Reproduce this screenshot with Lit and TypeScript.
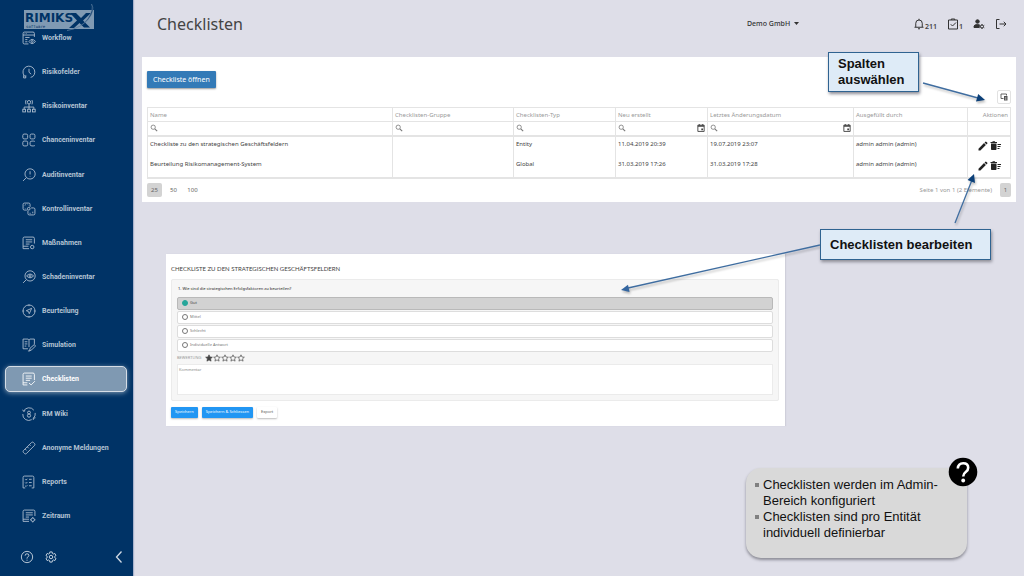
import { LitElement, html, css, svg, nothing } from "lit";
import { customElement, state } from "lit/decorators.js";
import { classMap } from "lit/directives/class-map.js";

const navIcons: Record<string, unknown> = {
  workflow: svg`<path d="M23 11V4.500Q23 2 20.500 2h-16Q2 2 2 4.500v17Q2 24 4.500 24H12M2 7.500h21M5 4.800h1M8 4.800h1M6 12h8M6 16h4M6 20h4"/><path d="M13 19.500q5.500-8 12 0q-6.500 8-12 0z"/><circle cx="19" cy="19.500" r="1.800"/>`,
  clock: svg`<path d="M7 22.500A11 11 0 1 1 20 21.500"/><path d="M13 7v6.500l4 3.500M3 19v5h4M7 19v5M20 21.500l-4 1.500"/>`,
  risk: svg`<circle cx="13" cy="6" r="3.200"/><path d="M7.500 2q-2 4 0 8M18.500 2q2 4 0 8M13 9.500v9M4 19v-4h18v4"/><rect x="1.500" y="19" width="5" height="5"/><rect x="10.500" y="19" width="5" height="5"/><rect x="19.500" y="19" width="5" height="5"/>`,
  chance: svg`<rect x="1.500" y="2" width="9" height="9" rx="2.500"/><rect x="15" y="2" width="9" height="9" rx="2.500"/><rect x="1.500" y="15" width="9" height="9" rx="2.500"/><path d="M24 16q-1-1-3-1h-2.500Q15 15 15 18v3q0 3 3.500 3H21q2 0 3-1"/>`,
  audit: svg`<circle cx="15" cy="11" r="9.500"/><path d="M8 18l-6 6M15 6v6M15 14.800v1"/>`,
  control: svg`<path d="M9 15H4.500Q2 15 2 12.500v-8Q2 2 4.500 2h8Q15 2 15 4.500V9M5 6l2-1M11 5l1 1M5 11l1 1"/><path d="M17 11h4.500q2.500 0 2.500 2.500v8q0 2.500-2.500 2.500h-8q-2.500 0-2.500-2.500V16M14 21h2M20 21v-3"/><circle cx="12.500" cy="12.500" r="2.500"/>`,
  task: svg`<path d="M13 23.500H2V4.500Q2 2 4.500 2h16Q23 2 23 4.500V14M2 19h10M7 7h12M7 11h12M7 15h7"/><circle cx="19" cy="20.500" r="3.200"/>`,
  damage: svg`<circle cx="15" cy="11" r="9.500"/><path d="M8 18l-6 6M8.500 11q6.500-7 13 0q-6.500 7-13 0z"/><circle cx="15" cy="11" r="2"/>`,
  compass: svg`<circle cx="13" cy="13" r="11.200"/><path d="M18 8L8 12.500l4 1.500 1.500 4zM13 1v3M13 22v3M1 13h3M22 13h3"/>`,
  simulation: svg`<path d="M23 11V2h-8.500L13 3.500 11.500 2H2v18h9M13 3.500V17M5 7h5M5 11h5M5 15h3"/><path d="M14 24l1-5 8-7 2 3-7 7zM11 24h3"/>`,
  checklist: svg`<path d="M10 24H2V4.500Q2 2 4.500 2h16Q23 2 23 4.500V15M2 20h8M7 7.500h11M7 11.500h11M7 15.500h8M13 20.500l4 3.500 7-7"/>`,
  wiki: svg`<path d="M3 8A11 11 0 0 1 22 6M24.500 11A11 11 0 0 1 21 21M18 23.500A11 11 0 0 1 1.500 13M1 5l2 3 3-1M25 20l-4 1v3"/><circle cx="13" cy="10.300" r="2.700"/><circle cx="13" cy="16" r="3"/>`,
  anonymous: svg`<path d="M2.500 18L18 2.500q1.500-1 3 0l2.500 2.500q1 1.500 0 3L8 23.500q-1.500 1-3 0L2.500 21q-1-1.500 0-3zM6 15l2.500 2.500M10 11l2.500 2.500M14 7l2 2"/>`,
  reports: svg`<path d="M6 24H2V4.500Q2 2 4.500 2h15Q22 2 22 4.500V24h-4M6 8l1.500 1.500L10 7M6 14l1.500 1.500L10 13M6 20l1.500 1.500L10 19M13 8h5M13 14h5M13 20h5"/>`,
  period: svg`<path d="M13 23H2V4.500Q2 2 4.500 2h17Q24 2 24 4.500V13M2 19h11M7 7h13M7 11h13M7 15h6"/><circle cx="20" cy="20" r="3.200"/><path d="M20 15v2M20 23v2M15 20h2M23 20h2"/>`,
};

const navItems: [string, string][] = [
  ["workflow", "Workflow"],
  ["clock", "Risikofelder"],
  ["risk", "Risikoinventar"],
  ["chance", "Chanceninventar"],
  ["audit", "Auditinventar"],
  ["control", "Kontrollinventar"],
  ["task", "Maßnahmen"],
  ["damage", "Schadeninventar"],
  ["compass", "Beurteilung"],
  ["simulation", "Simulation"],
  ["checklist", "Checklisten"],
  ["wiki", "RM Wiki"],
  ["anonymous", "Anonyme Meldungen"],
  ["reports", "Reports"],
  ["period", "Zeitraum"],
];

const gearPath =
  "M19.4 13a7.500 7.500 0 0 0 0-2l2.100-1.600-2-3.500-2.500 1a7.500 7.500 0 0 0-1.700-1L15 3.300h-4l-.400 2.600a7.500 7.500 0 0 0-1.700 1l-2.500-1-2 3.500L6.500 11a7.500 7.500 0 0 0 0 2l-2.100 1.600 2 3.500 2.500-1a7.500 7.500 0 0 0 1.700 1l.400 2.600h4l.400-2.600a7.500 7.500 0 0 0 1.700-1l2.500 1 2-3.500z";

@customElement("side-nav")
export class SideNav extends LitElement {
  static styles = css`
    :host {
      display: flex;
      flex-direction: column;
      flex: none;
      width: 133px;
      min-height: 100vh;
      box-sizing: border-box;
      background: #003366;
      color: #b4c3d3;
      font-family: Roboto, sans-serif;
      box-shadow: 1px 0 1px #a9b3cc;
    }
    .brand {
      height: 25px;
    }
    .brand svg {
      display: block;
      margin-left: 24px;
      overflow: visible;
    }
    nav {
      flex: 1;
      display: flex;
      flex-direction: column;
      justify-content: space-between;
    }
    .item {
      display: flex;
      align-items: center;
      gap: 6px;
      height: 26px;
      box-sizing: border-box;
      margin: 0 6px 0 5px;
      padding-left: 16px;
      border: 1px solid transparent;
      border-radius: 5px;
      font-size: 7px;
      font-weight: 700;
      line-height: 12px;
      color: inherit;
      text-decoration: none;
    }
    .item svg,
    .foot svg {
      width: 14px;
      height: 14px;
      fill: none;
      stroke: currentColor;
      stroke-width: 1.6;
    }
    .active {
      background: #7f99b2;
      border-color: #d5dde6;
      color: #ffffff;
      box-shadow: 0 1px 5px #7f99b2;
    }
    .foot {
      display: flex;
      align-items: center;
      gap: 10px;
      height: 47px;
      box-sizing: border-box;
      padding: 8px 7px 0 20px;
    }
    .foot button {
      display: flex;
      padding: 0;
      border: 0;
      background: none;
      color: #d0dae4;
    }
    .foot .collapse {
      margin-left: auto;
    }
    .foot .collapse svg {
      stroke-width: 1.3;
    }
  `;

  render() {
    return html`
      <div class="brand">
        <svg width="72" height="34" viewBox="24 0 72 34" role="img" aria-label="RIMIKS X software">
          <rect x="24" y="10" width="70" height="19" fill="#809ab3" />
          <text x="25" y="22" font-family="DejaVu Sans" font-weight="700" font-size="12" fill="#003366">RIMIKS</text>
          <text x="26" y="28" font-family="DejaVu Sans Mono" font-size="4" fill="#003366">software</text>
          <path d="M70 13h6l5 5 5-5h5l-8 7.500 7 7h-6l-4.500-4.500-5.500 5h-5l8-7.500z" fill="#003366" />
          <path d="M91.500 4q4 6-3 15T67 30.500Q82 28 88 18.500T91.500 4z" fill="#003366" stroke="#5f7f9f" stroke-width="0.500" />
        </svg>
      </div>
      <nav>
        ${navItems.map(
          ([icon, label]) => html`<a
            href="#${icon}"
            class=${classMap({ item: true, active: icon === "checklist" })}
            aria-current=${icon === "checklist" ? "page" : nothing}
            ><svg viewBox="0 0 26 26" aria-hidden="true">${navIcons[icon]}</svg><span>${label}</span></a
          >`
        )}
      </nav>
      <div class="foot">
        <button aria-label="Hilfe">
          <svg viewBox="0 0 26 26">
            <circle cx="13" cy="13" r="10.500" />
            <path d="M9.500 10.500q0-3.500 3.500-3.500t3.500 3q0 2-2 3T13 16M13 18v2" />
          </svg>
        </button>
        <button aria-label="Einstellungen">
          <svg viewBox="1 0 24 24"><path d=${gearPath} /><circle cx="13" cy="12" r="3" /></svg>
        </button>
        <button class="collapse" aria-label="Menü einklappen">
          <svg viewBox="0 0 14 14"><path d="M9.500 1.500L4.500 7l5 5.500" /></svg>
        </button>
      </div>
    `;
  }
}

const search = svg`<circle cx="6" cy="6" r="4" fill="none" stroke="#777" stroke-width="1.500"/><path d="M9 9l4.500 4.500" stroke="#777" stroke-width="2"/>`;
const calendar = svg`<path d="M1.500 2h11v11h-11zM4 0v3M10 0v3" fill="none" stroke="#444" stroke-width="1.600"/><path d="M1.500 2h11v3h-11zM7.500 8h3v3h-3z" fill="#444"/>`;

interface Column {
  key: string;
  label: string;
  filter?: "text" | "date";
}

const columns: Column[] = [
  { key: "name", label: "Name", filter: "text" },
  { key: "group", label: "Checklisten-Gruppe", filter: "text" },
  { key: "type", label: "Checklisten-Typ", filter: "text" },
  { key: "created", label: "Neu erstellt", filter: "date" },
  { key: "changed", label: "Letztes Änderungsdatum", filter: "date" },
  { key: "author", label: "Ausgefüllt durch" },
  { key: "actions", label: "Aktionen" },
];

const rows: Record<string, string>[] = [
  {
    name: "Checkliste zu den strategischen Geschäftsfeldern",
    group: "",
    type: "Entity",
    created: "11.04.2019 20:39",
    changed: "19.07.2019 23:07",
    author: "admin admin (admin)",
  },
  {
    name: "Beurteilung Risikomanagement-System",
    group: "",
    type: "Global",
    created: "31.03.2019 17:26",
    changed: "31.03.2019 17:28",
    author: "admin admin (admin)",
  },
];

@customElement("checklist-grid")
export class ChecklistGrid extends LitElement {
  static styles = css`
    :host {
      display: block;
      padding: 14px 5px 5px;
      background: #ffffff;
      color: #444444;
      font-family: "Noto Sans", sans-serif;
      font-size: 6px;
      line-height: 10px;
    }
    button {
      font: inherit;
      border: 0;
      padding: 0;
      background: none;
      color: inherit;
    }
    .open {
      display: block;
      height: 17px;
      padding: 0 6px;
      background: #337ab7;
      color: #ffffff;
      border-radius: 1px;
      font-size: 7px;
      box-shadow: 0 1px 2px #999999;
    }
    .tools {
      display: flex;
      justify-content: flex-end;
      padding: 2px 0 3px;
    }
    .chooser {
      display: flex;
      align-items: center;
      justify-content: center;
      width: 14px;
      height: 14px;
      box-sizing: border-box;
      border: 1px solid #e2e2e2;
      border-radius: 2px;
    }
    svg {
      display: block;
    }
    table {
      width: 100%;
      table-layout: fixed;
      border-collapse: collapse;
      border: 1px solid #e4e4e4;
      border-bottom-width: 2px;
    }
    th,
    td {
      padding: 0 2px;
      border-right: 1px solid #e4e4e4;
      text-align: left;
      overflow: hidden;
      white-space: nowrap;
    }
    th {
      height: 14px;
      box-sizing: border-box;
      color: #999999;
      font-weight: 400;
      border-bottom: 1px solid #e4e4e4;
    }
    thead tr:last-child td {
      height: 14px;
      box-sizing: border-box;
      border-bottom: 2px solid #e4e4e4;
    }
    tbody td {
      height: 21px;
      box-sizing: border-box;
      padding-top: 2px;
      vertical-align: top;
    }
    .col-group { width: 121px; }
    .col-type { width: 102px; }
    .col-created { width: 92px; }
    .col-changed { width: 146px; }
    .col-author { width: 114px; }
    .col-actions { width: 43px; }
    th:last-child {
      text-align: right;
    }
    .filter {
      display: flex;
      align-items: center;
      gap: 2px;
    }
    .filter svg {
      flex: none;
      width: 8px;
      height: 8px;
    }
    .filter input {
      flex: 1;
      min-width: 0;
      height: 10px;
      border: 0;
      padding: 0;
      outline: 0;
      background: none;
      font: inherit;
    }
    .actions {
      display: flex;
      justify-content: center;
      gap: 1px;
      padding-top: 1px;
    }
    .pager {
      display: flex;
      align-items: center;
      gap: 4px;
      padding-top: 4px;
      color: #666666;
    }
    .pager button {
      min-width: 15px;
      height: 14px;
      border-radius: 2px;
    }
    .pager .current {
      background: #d3d3d3;
    }
    .pager .page {
      min-width: 11px;
    }
    .info {
      margin-left: auto;
      margin-right: 4px;
      color: #999999;
    }
  `;

  private filterCell(column: Column) {
    if (!column.filter) return html`<td></td>`;
    return html`<td>
      <div class="filter">
        <svg viewBox="0 0 15 15" aria-hidden="true">${search}</svg>
        <input type="text" aria-label=${column.label + " filtern"} />
        ${column.filter === "date"
          ? html`<button aria-label="Kalender öffnen"><svg viewBox="0 0 14 14">${calendar}</svg></button>`
          : nothing}
      </div>
    </td>`;
  }

  render() {
    return html`
      <button class="open">Checkliste öffnen</button>
      <div class="tools">
        <button class="chooser" aria-label="Spalten auswählen">
          <svg width="8" height="8" viewBox="0 0 16 16">
            <path d="M13 5V2H2v9h5" fill="none" stroke="#555" stroke-width="1.800" />
            <path d="M8 6h7v9H8z" fill="#555" />
            <path d="M11.500 8v6" stroke="#fff" />
          </svg>
        </button>
      </div>
      <table>
        <colgroup>
          ${columns.map((c) => html`<col class="col-${c.key}" />`)}
        </colgroup>
        <thead>
          <tr>
            ${columns.map((c) => html`<th scope="col">${c.label}</th>`)}
          </tr>
          <tr>
            ${columns.map((c) => this.filterCell(c))}
          </tr>
        </thead>
        <tbody>
          ${rows.map(
            (row) => html`<tr>
              ${columns.map((c) =>
                c.key === "actions"
                  ? html`<td>
                      <div class="actions">
                        <button aria-label="Bearbeiten">
                          <svg width="12" height="12" viewBox="0 0 24 24">
                            <path
                              fill="#222"
                              d="M3 17.250V21h3.750L17.810 9.940l-3.750-3.750L3 17.250zM20.710 7.040a1 1 0 0 0 0-1.410l-2.340-2.340a1 1 0 0 0-1.410 0l-1.830 1.830 3.750 3.750 1.830-1.830z"
                            />
                          </svg>
                        </button>
                        <button aria-label="Löschen">
                          <svg width="12" height="12" viewBox="0 0 24 24">
                            <path
                              fill="#222"
                              d="M15 16h4v2h-4zm0-8h7v2h-7zm0 4h6v2h-6zM2 18c0 1.100.9 2 2 2h7c1.100 0 2-.9 2-2V7H2v11zM14 4h-3.500l-1-1.500h-4l-1 1.500H1v2.200h13z"
                            />
                          </svg>
                        </button>
                      </div>
                    </td>`
                  : html`<td>${row[c.key]}</td>`
              )}
            </tr>`
          )}
        </tbody>
      </table>
      <div class="pager">
        <button class="current">25</button>
        <button>50</button>
        <button>100</button>
        <span class="info">Seite 1 von 1 (2 Elemente)</span>
        <button class="current page">1</button>
      </div>
    `;
  }
}

@customElement("checklist-form")
export class ChecklistForm extends LitElement {
  static styles = css`
    :host {
      display: block;
      padding: 11px 6px 8px 5px;
      background: #ffffff;
      color: #444444;
      font-family: "Noto Sans", sans-serif;
      font-size: 4px;
      line-height: 8px;
      box-shadow: 1px 0 1px #cfcfda;
    }
    h2 {
      margin: 0 0 6px;
      font-family: Lato, sans-serif;
      font-size: 6px;
      font-weight: 400;
      line-height: 8px;
      text-transform: uppercase;
    }
    fieldset {
      margin: 0;
      min-width: 0;
      padding: 5px 5px;
      border: 1px solid #ebebeb;
      border-radius: 2px;
      background: #f6f6f6;
    }
    legend {
      float: left;
      width: 100%;
      margin-bottom: 4px;
      padding: 0 1px;
      box-sizing: border-box;
      font-weight: 500;
    }
    .options {
      clear: both;
      display: flex;
      flex-direction: column;
      gap: 1px;
    }
    .option {
      display: flex;
      align-items: center;
      gap: 2px;
      height: 13px;
      box-sizing: border-box;
      padding-left: 4px;
      border: 1px solid #dddddd;
      border-radius: 2px;
      background: #ffffff;
      color: #777777;
    }
    .chosen {
      background: #d2d2d2;
      border-color: #b9b9b9;
      color: #444444;
    }
    .option input {
      appearance: none;
      width: 6px;
      height: 6px;
      box-sizing: border-box;
      margin: 0;
      border: 1px solid #777777;
      border-radius: 50%;
    }
    .option input:checked {
      background: #26a69a;
      border-color: #26a69a;
    }
    .rating {
      display: flex;
      align-items: center;
      gap: 4px;
      height: 12px;
      color: #999999;
    }
    .stars {
      display: flex;
    }
    .stars button {
      padding: 0;
      border: 0;
      background: none;
    }
    .stars svg {
      display: block;
    }
    textarea {
      display: block;
      width: 100%;
      height: 31px;
      box-sizing: border-box;
      padding: 1px 1px;
      border: 1px solid #ebebeb;
      background: #ffffff;
      resize: none;
      font: inherit;
    }
    textarea::placeholder {
      color: #888888;
    }
    .buttons {
      display: flex;
      gap: 4px;
      padding-top: 6px;
    }
    .buttons button {
      height: 11px;
      padding: 0 4px;
      border: 0;
      border-radius: 1px;
      background: #2196f3;
      color: #ffffff;
      font: inherit;
      box-shadow: 0 1px 2px #bbbbbb;
    }
    .buttons .plain {
      background: #ffffff;
      color: #555555;
    }
  `;

  @state() private answer = 0;
  @state() private stars = 1;

  render() {
    const options = ["Gut", "Mittel", "Schlecht", "Individuelle Antwort"];
    return html`
      <h2>Checkliste zu den strategischen Geschäftsfeldern</h2>
      <fieldset>
        <legend>1. Wie sind die strategischen Erfolgsfaktoren zu beurteilen?</legend>
        <div class="options">
          ${options.map(
            (text, i) => html`<label class=${classMap({ option: true, chosen: i === this.answer })}>
              <input type="radio" name="answer" .checked=${i === this.answer} @change=${() => (this.answer = i)} />
              ${text}
            </label>`
          )}
        </div>
        <div class="rating">
          <span>BEWERTUNG</span>
          <div class="stars">
            ${[1, 2, 3, 4, 5].map(
              (n) => html`<button aria-label="${n} von 5" @click=${() => (this.stars = n)}>
                <svg width="8" height="8" viewBox="0 0 24 24">
                  <path
                    d="M12 2.500l2.900 6.500 7.100.700-5.400 4.700 1.600 7L12 17.700l-6.200 3.700 1.600-7L2 9.700 9.100 9z"
                    fill=${n <= this.stars ? "#444" : "none"}
                    stroke="#444"
                    stroke-width="2"
                  />
                </svg>
              </button>`
            )}
          </div>
        </div>
        <textarea placeholder="Kommentar" aria-label="Kommentar"></textarea>
      </fieldset>
      <div class="buttons">
        <button>Speichern</button>
        <button>Speichern &amp; Schliessen</button>
        <button class="plain">Export</button>
      </div>
    `;
  }
}

@customElement("app-root")
export class AppRoot extends LitElement {
  static styles = css`
    :host {
      display: flex;
      min-height: 100vh;
      background: #dedee8;
      font-family: "Liberation Sans", Arial, sans-serif;
      color: #111111;
    }
    main {
      flex: 1;
      min-width: 0;
      position: relative;
      display: flex;
      flex-direction: column;
    }
    header {
      display: flex;
      align-items: center;
      height: 57px;
      box-sizing: border-box;
      padding: 0 17px 10px 24px;
      font-family: "Noto Sans", sans-serif;
      color: #444444;
    }
    h1 {
      margin: 0;
      font-size: 16px;
      font-weight: 400;
      line-height: 24px;
    }
    .client {
      display: flex;
      align-items: center;
      gap: 3px;
      margin-left: auto;
      margin-right: 114px;
    }
    .client select {
      appearance: none;
      border: 0;
      padding: 0;
      background: none;
      font: 500 7px/12px "Noto Sans", sans-serif;
      color: #333333;
    }
    .icons {
      display: flex;
      align-items: center;
      gap: 10px;
    }
    .icons button {
      display: flex;
      align-items: flex-end;
      padding: 0;
      border: 0;
      background: none;
      color: #444444;
      font: 600 7px/6px "Noto Sans", sans-serif;
    }
    .icons svg {
      display: block;
      fill: none;
      stroke: #333333;
      stroke-width: 2;
    }
    .grid {
      margin: 0 8px 0 9px;
    }
    .form {
      margin: 52px 239px 0 33px;
    }
    .callout {
      position: absolute;
      box-sizing: border-box;
      padding: 3px 9px 3px;
      border: 1px solid #2f6391;
      background: #deebf7;
      box-shadow: 1px 2px 3px #8c8c96;
      font-size: 13px;
      font-weight: 700;
      line-height: 16px;
    }
    .columns-hint {
      top: 52px;
      right: 105px;
      width: 91px;
    }
    .edit-hint {
      top: 229px;
      right: 33px;
      width: 171px;
      padding: 7px 9px 6px;
    }
    .arrows {
      position: absolute;
      top: 0;
      right: 0;
      pointer-events: none;
      filter: drop-shadow(1px 2px 1px #00000040);
    }
    .note {
      position: relative;
      align-self: flex-end;
      width: 221px;
      min-height: 90px;
      box-sizing: border-box;
      margin: 42px 57px 18px 0;
      padding: 9px 12px 9px 9px;
      border-radius: 15px;
      background: #d9d9d9;
      box-shadow: 0 2px 3px #8c8c96;
      font-size: 13px;
      line-height: 16px;
    }
    .note ul {
      margin: 0;
      padding: 0;
      list-style: none;
    }
    .note li {
      display: flex;
      gap: 4px;
    }
    .note li::before {
      content: "";
      flex: none;
      width: 4px;
      height: 4px;
      margin-top: 6px;
      background: #808080;
    }
    .badge {
      position: absolute;
      top: -11px;
      right: -11px;
    }
  `;

  render() {
    return html`
      <side-nav></side-nav>
      <main>
        <header>
          <h1>Checklisten</h1>
          <div class="client">
            <select aria-label="Mandant">
              <option>Demo GmbH</option>
            </select>
            <svg width="5" height="3" viewBox="0 0 5 3" aria-hidden="true"><path d="M0 0h5L2.500 3z" fill="#333" /></svg>
          </div>
          <div class="icons">
            <button aria-label="Benachrichtigungen: 211">
              <svg width="12" height="12" viewBox="0 0 24 24">
                <path d="M3 18.500h18M5.500 18V10.500Q5.500 4 12 4t6.500 6.500V18M12 1.500V4M10 21.500h4" /></svg
              >211
            </button>
            <button aria-label="Aufgaben: 1">
              <svg width="12" height="12" viewBox="0 0 24 24">
                <path d="M3 4h18v18H3zM8.500 4V2h7v2M7.500 12.500l3.500 3.500 7-7" /></svg
              >1
            </button>
            <button aria-label="Benutzerverwaltung">
              <svg width="12" height="12" viewBox="0 0 24 24">
                <circle cx="9" cy="7" r="3.500" fill="#333" />
                <path d="M2 19v-2q0-4 7-4 2 0 3.500.500v5.500z" fill="#333" />
                <circle cx="18" cy="17" r="3" />
                <path d="M18 12v2M18 20v2M13.500 14.500l1.500 1M21 18.500l1.500 1M13.500 19.500l1.500-1M21 15.500l1.500-1" />
              </svg>
            </button>
            <button aria-label="Abmelden">
              <svg width="12" height="12" viewBox="0 0 24 24"><path d="M9 3H3v18h6M9 12h13M17.500 7.500L22 12l-4.500 4.500" /></svg>
            </button>
          </div>
        </header>
        <checklist-grid class="grid"></checklist-grid>
        <checklist-form class="form"></checklist-form>
        <aside class="note">
          <ul>
            <li>Checklisten werden im Admin-Bereich konfiguriert</li>
            <li>Checklisten sind pro Entität individuell definierbar</li>
          </ul>
          <svg class="badge" width="30" height="30" viewBox="0 0 30 30" aria-hidden="true">
            <circle cx="15" cy="15" r="14.300" fill="#000" />
            <path d="M9.800 11.500q.4-5.300 5.400-5.300 5 0 5 4.500 0 2.500-2.500 4.300-2.500 1.800-2.500 4.500" fill="none" stroke="#fff" stroke-width="2.600" />
            <circle cx="15.200" cy="23.500" r="1.900" fill="#fff" />
          </svg>
        </aside>
        <svg class="arrows" width="424" height="300" viewBox="600 0 424 300" aria-hidden="true">
          <g stroke="#3f6da0" stroke-width="1.300">
            <path d="M923 83L978 98" />
            <path d="M955 223L972 180" />
            <path d="M820 245L628 288" />
          </g>
          <path d="M985 100l-9 1.500 2.200-7.500z" fill="#0b3f78" />
          <path d="M974 174l1 9-7.500-3z" fill="#0b3f78" />
          <path d="M621 290l7-5.300 1.600 7.200z" fill="#3466a0" />
        </svg>
        <div class="callout columns-hint">Spalten auswählen</div>
        <div class="callout edit-hint">Checklisten bearbeiten</div>
      </main>
    `;
  }
}
